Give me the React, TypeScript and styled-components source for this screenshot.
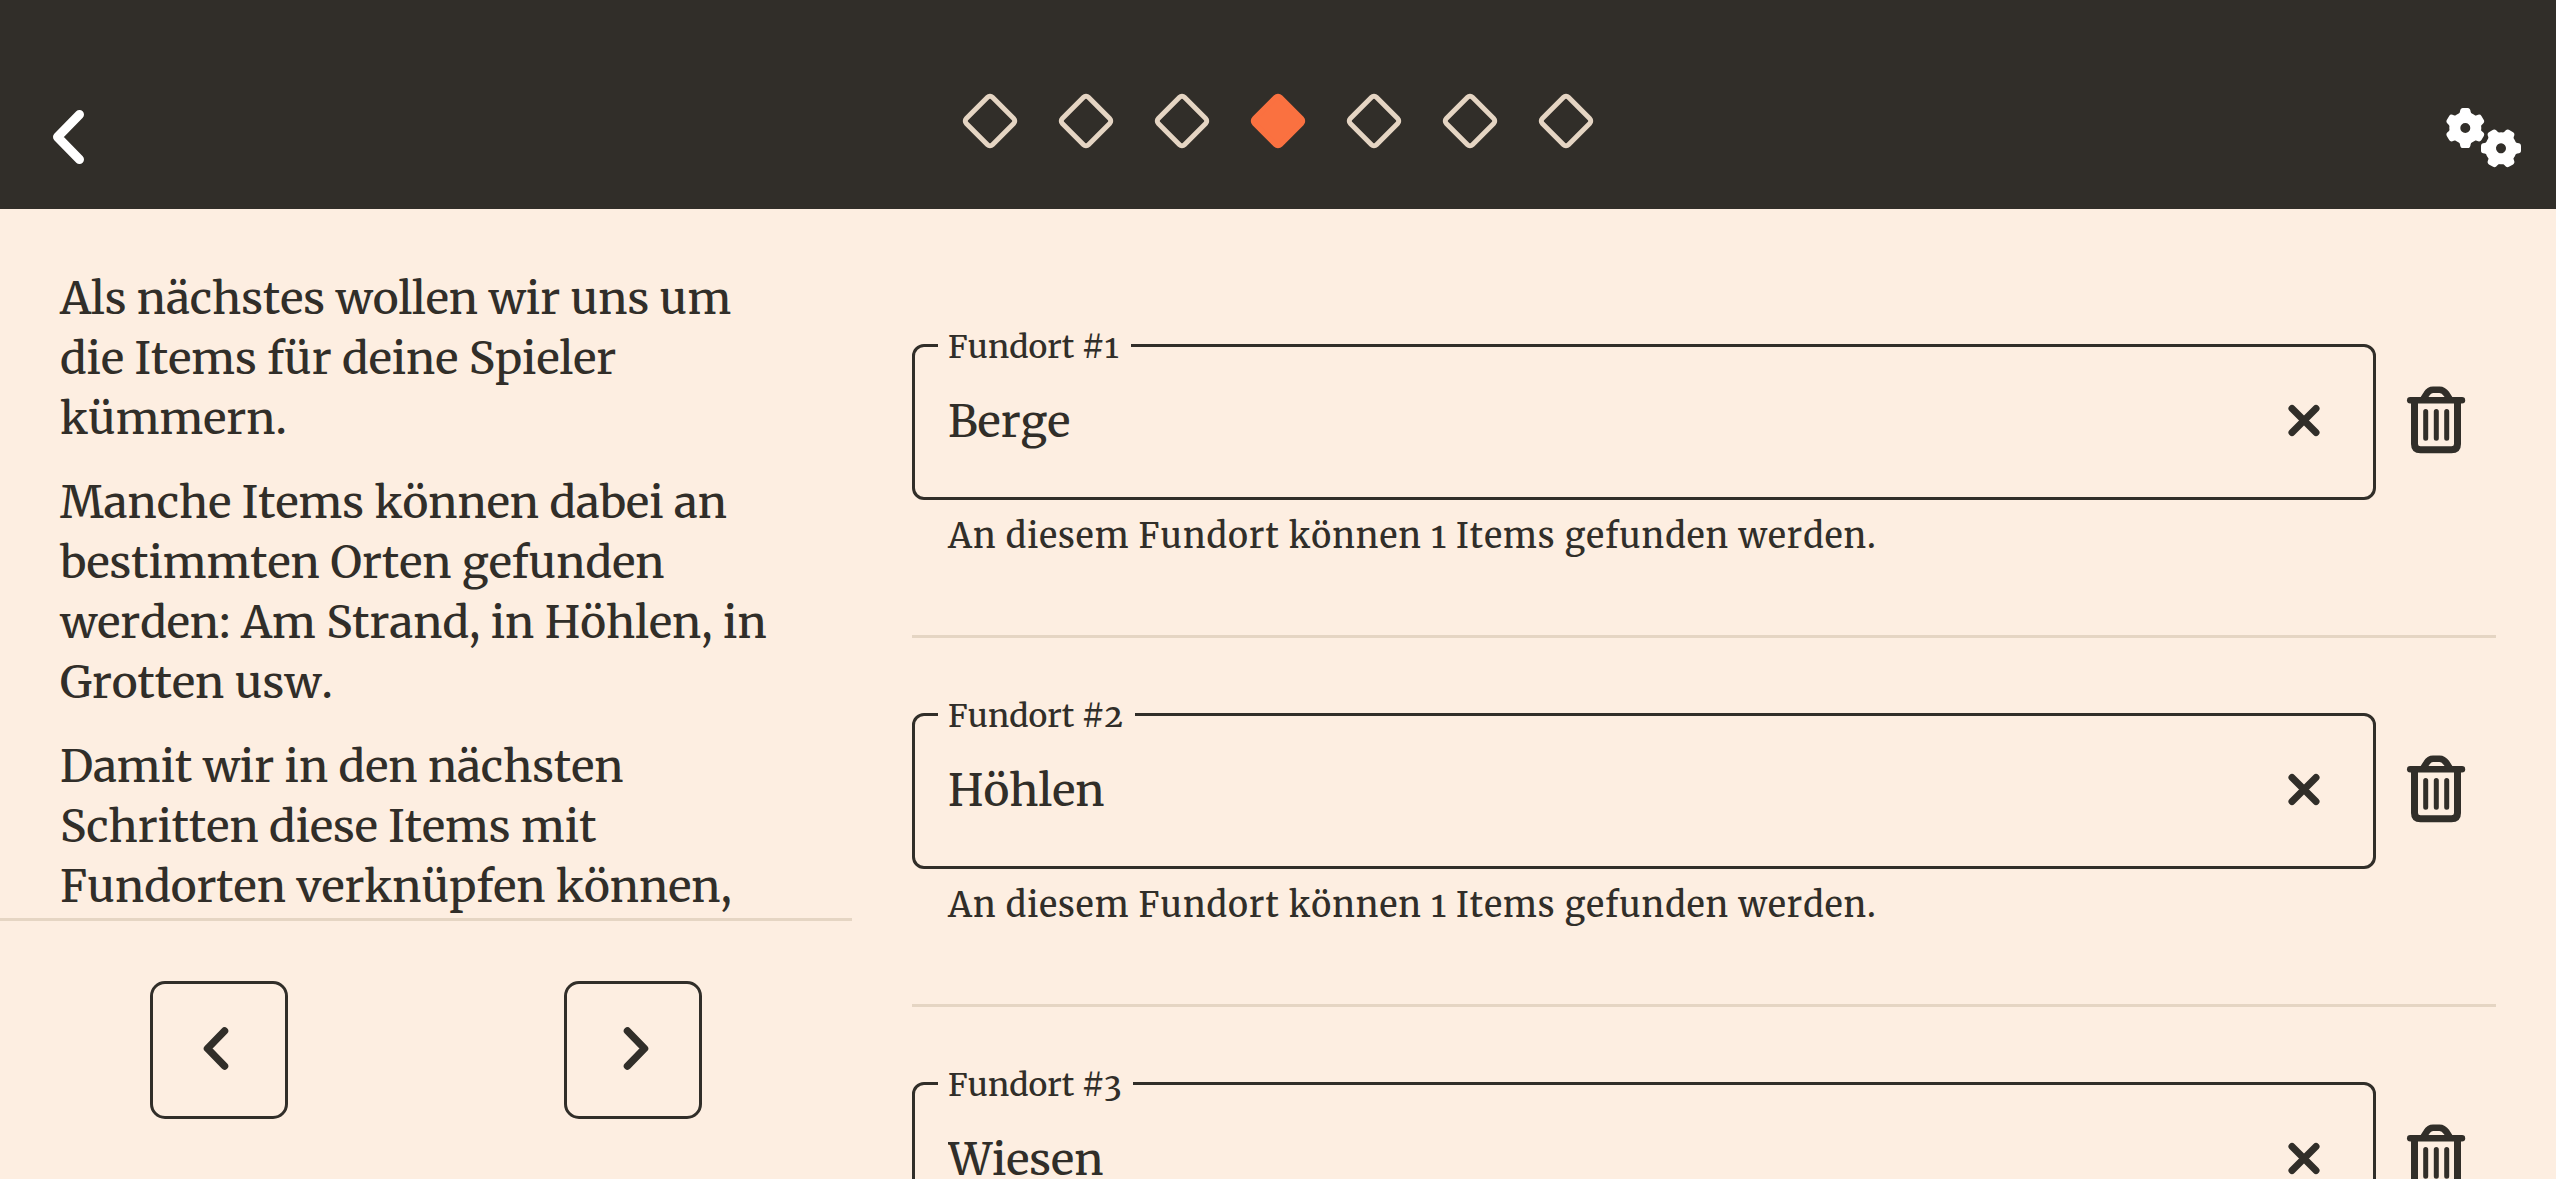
import { useState } from 'react';
import styled, { createGlobalStyle } from 'styled-components';

const color = {
  dark: '#312e29',
  paper: '#fdeee1',
  line: '#e5d5c3',
  accent: '#fa7140',
  white: '#ffffff',
};

const GlobalStyle = createGlobalStyle`
  *, *::before, *::after { box-sizing: border-box; }
  body {
    margin: 0;
    background: ${color.paper};
    color: ${color.dark};
    font-family: Merriweather, 'DejaVu Serif Condensed', serif;
    font-size: 44px;
    font-weight: 500;
    font-kerning: none;
    font-variant-numeric: oldstyle-nums;
    line-height: 60px;
  }
`;

const Screen = styled.div`
  display: flex;
  flex-direction: column;
  height: 100vh;
  overflow: hidden;
`;

const Header = styled.header`
  display: grid;
  grid-template-columns: 1fr auto 1fr;
  align-items: center;
  flex: none;
  padding: 89px 24px 24px;
  background: ${color.dark};
`;

const IconButton = styled.button<{ $align?: string; $width?: number }>`
  display: flex;
  align-items: center;
  justify-content: center;
  justify-self: ${p => p.$align ?? 'center'};
  flex: none;
  width: ${p => (p.$width ? `${p.$width}px` : 'auto')};
  padding: 0;
  border: 0;
  background: none;
  color: inherit;
  cursor: pointer;
`;

const HeaderButton = styled(IconButton)`
  color: ${color.white};
`;

const Steps = styled.ol`
  display: flex;
  gap: 54px;
  margin: 0;
  padding: 0 0 32px;
  list-style: none;
`;

const Step = styled.li<{ $active: boolean }>`
  width: 42px;
  height: 42px;
  border: 5px solid ${p => (p.$active ? color.accent : color.line)};
  border-radius: 6px;
  background: ${p => (p.$active ? color.accent : 'transparent')};
  transform: rotate(45deg);
`;

const Main = styled.main`
  display: grid;
  grid-template-columns: minmax(0, 1fr) minmax(0, 2fr);
  flex: 1;
  min-height: 0;
`;

const Guide = styled.section`
  display: flex;
  flex-direction: column;
  min-height: 0;
`;

const GuideText = styled.div`
  flex: 1;
  min-height: 0;
  padding: 60px 60px 0;
  overflow-y: auto;
  scrollbar-width: none;
`;

const Paragraph = styled.p`
  margin: 0 0 24px;
`;

const GuideNav = styled.nav`
  display: flex;
  justify-content: space-around;
  flex: none;
  padding: 60px 12px;
  border-top: 3px solid ${color.line};
`;

const NavButton = styled.button`
  display: flex;
  align-items: center;
  justify-content: center;
  width: 138px;
  height: 138px;
  padding: 0;
  border: 3px solid ${color.dark};
  border-radius: 15px;
  background: none;
  color: inherit;
  cursor: pointer;
`;

const Places = styled.ul`
  min-height: 0;
  margin: 0;
  padding: 60px;
  overflow-y: auto;
  scrollbar-width: none;
  list-style: none;
`;

const Place = styled.li`
  padding: 75px 0 78px;
  border-bottom: 3px solid ${color.line};
`;

const FieldRow = styled.div`
  display: flex;
`;

const Field = styled.div`
  position: relative;
  display: flex;
  flex: 1;
  min-width: 0;
  height: 156px;
  padding-right: 24px;
  border: 3px solid ${color.dark};
  border-radius: 12px;
`;

const FieldLabel = styled.label`
  position: absolute;
  top: -18px;
  left: 23px;
  padding: 0 12px 0 10px;
  background: ${color.paper};
  font-size: 32px;
  line-height: 36px;
`;

const FieldInput = styled.input`
  flex: 1;
  min-width: 0;
  padding: 0 0 0 33px;
  border: 0;
  outline: 0;
  background: none;
  color: inherit;
  font: inherit;
`;

const Helper = styled.p`
  margin: 15px 0 0;
  padding-left: 36px;
  font-size: 34px;
  line-height: 42px;
  letter-spacing: 1px;
`;

function BackIcon() {
  return (
    <svg width="96" height="96" viewBox="0 0 96 96" fill="none" stroke="currentColor" strokeWidth="9" strokeLinecap="round" strokeLinejoin="round" aria-hidden="true">
      <path d="M55.5 25.5L33.5 48L55.5 70.5" />
    </svg>
  );
}

const toothAngles = [0, 60, 120, 180, 240, 300];

function Gear({ x, y, turn }: { x: number; y: number; turn: number }) {
  return (
    <g transform={`translate(${x} ${y}) rotate(${turn})`}>
      <circle r="10.5" fill="none" stroke="currentColor" strokeWidth="11" />
      {toothAngles.map(a => (
        <path
          key={a}
          transform={`rotate(${a})`}
          fill="currentColor"
          d="M-8 -12.5Q-5.4 -14 -5.3 -16.4Q-5 -20 -2.4 -20H2.4Q5 -20 5.3 -16.4Q5.4 -14 8 -12.5L4 -8H-4Z"
        />
      ))}
    </g>
  );
}

function GearsIcon() {
  return (
    <svg width="96" height="96" viewBox="0 0 96 96" aria-hidden="true">
      <Gear x={29.3} y={39} turn={0} />
      <Gear x={65} y={59.3} turn={30} />
    </svg>
  );
}

function ChevronIcon({ next = false }: { next?: boolean }) {
  return (
    <svg width="72" height="72" viewBox="0 0 72 72" fill="none" stroke="currentColor" strokeWidth="7.5" strokeLinecap="round" strokeLinejoin="round" aria-hidden="true">
      <path d={next ? 'M30.5 17L47.5 34.5L30.5 52' : 'M41.5 17L24.5 34.5L41.5 52'} />
    </svg>
  );
}

function ClearIcon() {
  return (
    <svg width="48" height="48" viewBox="0 0 48 48" fill="none" stroke="currentColor" strokeWidth="7" strokeLinecap="round" aria-hidden="true">
      <path d="M12 10.5L36 34.5M36 10.5L12 34.5" />
    </svg>
  );
}

function TrashIcon() {
  return (
    <svg width="80" height="84" viewBox="0 4 80 84" fill="none" stroke="currentColor" strokeLinecap="round" strokeLinejoin="round" aria-hidden="true">
      <path strokeWidth="6.4" d="M14.2 24.3H66" />
      <path strokeWidth="7" d="M18.5 25V68Q18.5 73.8 24.5 73.8H55.5Q61.5 73.8 61.5 68V25" />
      <path strokeWidth="6.6" d="M27 23.5L30.5 18Q33 13.7 37 13.7H43.5Q47.5 13.7 50.5 18L54 23.5" />
      <path strokeWidth="5" d="M29.7 35.6V62.2M40.3 35.6V62.2M50.7 35.6V62.2" />
    </svg>
  );
}

const steps = [1, 2, 3, 4, 5, 6, 7];
const currentStep = 4;

const guide = [
  'Als nächstes wollen wir uns um die Items für deine Spieler kümmern.',
  'Manche Items können dabei an bestimmten Orten gefunden werden: Am Strand, in Höhlen, in Grotten usw.',
  'Damit wir in den nächsten Schritten diese Items mit Fundorten verknüpfen können,',
];

export default function App() {
  const [places, setPlaces] = useState([
    { id: 1, name: 'Berge', items: 1 },
    { id: 2, name: 'Höhlen', items: 1 },
    { id: 3, name: 'Wiesen', items: 1 },
  ]);

  const rename = (id: number, name: string) =>
    setPlaces(list => list.map(p => (p.id === id ? { ...p, name } : p)));
  const remove = (id: number) => setPlaces(list => list.filter(p => p.id !== id));

  return (
    <>
      <GlobalStyle />
      <Screen>
        <Header>
          <HeaderButton type="button" $align="start" aria-label="Zurück">
            <BackIcon />
          </HeaderButton>
          <Steps>
            {steps.map(n => (
              <Step key={n} $active={n === currentStep} aria-current={n === currentStep ? 'step' : undefined} />
            ))}
          </Steps>
          <HeaderButton type="button" $align="end" aria-label="Einstellungen">
            <GearsIcon />
          </HeaderButton>
        </Header>
        <Main>
          <Guide>
            <GuideText>
              {guide.map(text => (
                <Paragraph key={text}>{text}</Paragraph>
              ))}
            </GuideText>
            <GuideNav>
              <NavButton type="button" aria-label="Vorheriger Schritt">
                <ChevronIcon />
              </NavButton>
              <NavButton type="button" aria-label="Nächster Schritt">
                <ChevronIcon next />
              </NavButton>
            </GuideNav>
          </Guide>
          <Places>
            {places.map((place, i) => (
              <Place key={place.id}>
                <FieldRow>
                  <Field>
                    <FieldLabel htmlFor={`place-${place.id}`}>Fundort #{i + 1}</FieldLabel>
                    <FieldInput
                      id={`place-${place.id}`}
                      type="text"
                      value={place.name}
                      onChange={e => rename(place.id, e.target.value)}
                    />
                    <IconButton type="button" $width={90} aria-label="Eingabe löschen" onClick={() => rename(place.id, '')}>
                      <ClearIcon />
                    </IconButton>
                  </Field>
                  <IconButton type="button" $width={120} aria-label="Fundort entfernen" onClick={() => remove(place.id)}>
                    <TrashIcon />
                  </IconButton>
                </FieldRow>
                <Helper>An diesem Fundort können {place.items} Items gefunden werden.</Helper>
              </Place>
            ))}
          </Places>
        </Main>
      </Screen>
    </>
  );
}
